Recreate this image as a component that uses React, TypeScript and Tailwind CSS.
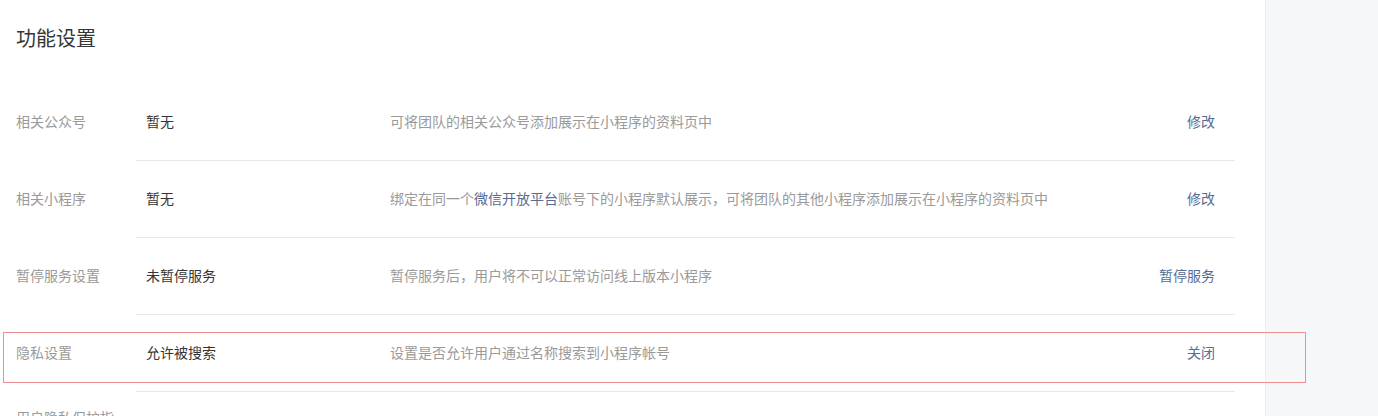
import React from "react"

interface Row {
  label: string
  value: string
  desc: React.ReactNode
  action: string
}

const rows: Row[] = [
  {
    label: "相关公众号",
    value: "暂无",
    desc: "可将团队的相关公众号添加展示在小程序的资料页中",
    action: "修改",
  },
  {
    label: "相关小程序",
    value: "暂无",
    desc: (
      <>
        绑定在同一个<span className="text-[#576b95]">微信开放平台</span>
        账号下的小程序默认展示，可将团队的其他小程序添加展示在小程序的资料页中
      </>
    ),
    action: "修改",
  },
  {
    label: "暂停服务设置",
    value: "未暂停服务",
    desc: "暂停服务后，用户将不可以正常访问线上版本小程序",
    action: "暂停服务",
  },
  {
    label: "隐私设置",
    value: "允许被搜索",
    desc: "设置是否允许用户通过名称搜索到小程序帐号",
    action: "关闭",
  },
]

const App: React.FC = () => {
  return (
    <div
      className="relative flex h-[416px] w-full overflow-hidden bg-white text-[14px]"
      style={{ fontFamily: '"Noto Sans CJK SC", "Noto Sans", sans-serif' }}
    >
      {/* 主体内容 */}
      <div className="w-[1265px] shrink-0 pl-4 pr-[30px] pt-[24px]">
        <h2 className="text-[20px] leading-[28px] font-normal text-[#353535]">功能设置</h2>

        <div className="mt-[32px]">
          {rows.map((row) => (
            <div key={row.label} className="flex">
              <div className="w-[120px] shrink-0 flex items-center pr-[10px] pb-[2px] text-[#9a9a9a]">{row.label}</div>
              <div className="flex flex-1 h-[77px] items-center pb-[2px] border-b border-[#e7e7eb]">
                <div className="w-[254px] shrink-0 pl-[10px] text-[#353535]">{row.value}</div>
                <div className="flex-1 text-[#9a9a9a]">{row.desc}</div>
                <div className="pr-5 text-[#576b95]">{row.action}</div>
              </div>
            </div>
          ))}

          {/* 下一行，被截断 */}
          <div className="flex">
            <div className="w-[120px] shrink-0 pr-[10px] pt-[14px] leading-[22px] text-[#9a9a9a]">用户隐私保护指引</div>
          </div>
        </div>
      </div>

      {/* 右侧栏 */}
      <div className="flex-1 border-l border-[#eceef1] bg-[#f6f7f9]" />

      {/* 高亮框 */}
      <div className="pointer-events-none absolute left-[3px] top-[332px] h-[51px] w-[1303px] border border-[#f08f92]" />
    </div>
  )
}

export default App
